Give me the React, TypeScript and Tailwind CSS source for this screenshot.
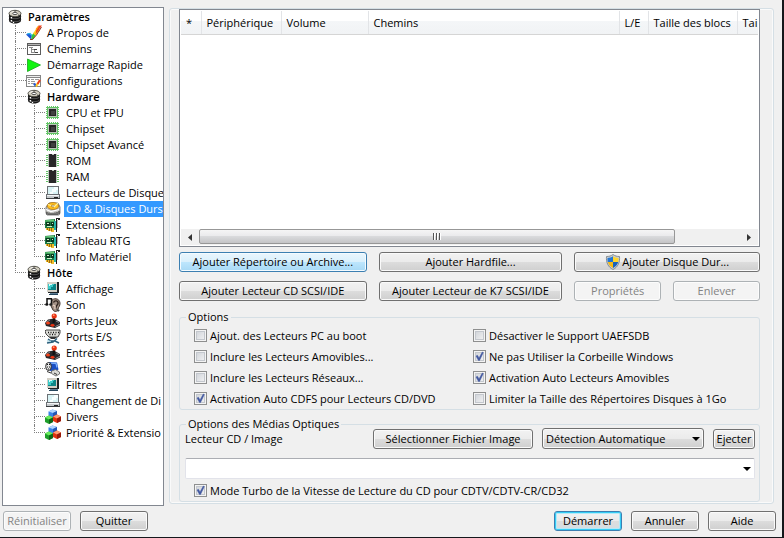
import React from 'react';
import { useState } from 'react';

type IconName =
  | 'drum' | 'check' | 'paths' | 'play' | 'config' | 'chip' | 'rom' | 'floppy'
  | 'disk' | 'board' | 'monitor' | 'sound' | 'joystick' | 'port' | 'output' | 'cubes';

const pins = [2, 4, 6, 8, 10, 12];

const icons: Record<IconName, React.ReactNode> = {
  drum: (
    <>
      <path d="M2 4.5v7c0 1.600 2.600 3 6 3s6-1.400 6-3v-7z" fill="#141414" />
      <path d="M2 7.500c1 1.500 3 2.200 6 2.200s5-.7 6-2.200M2 10.500c1 1.500 3 2.200 6 2.200s5-.7 6-2.200" fill="none" stroke="#6d6d6d" strokeWidth="0.7" />
      <path d="M4.500 8v1.500M4.500 11v1.500M6.500 13v1" stroke="#fff" strokeWidth="1.300" />
      <ellipse cx="8" cy="4.500" rx="6" ry="3.200" fill="#cfcbbd" stroke="#4a4840" strokeWidth="0.9" />
      <path d="M3.500 4c1-1.200 2.500-1.600 4-1.700" stroke="#fff" strokeWidth="0.9" fill="none" />
      <ellipse cx="8" cy="4.500" rx="2.200" ry="1.100" fill="#fff" stroke="#333" strokeWidth="0.8" />
      <path d="M8 3V1.300M11 6l2 .5" stroke="#333" strokeWidth="0.8" />
    </>
  ),
  check: (
    <>
      <path d="M0 9.500l3-1.500 3 2.500-1 4z" fill="#1e55d8" />
      <path d="M1 9l3-.5 2 2" stroke="#29b9e8" strokeWidth="1.200" fill="none" />
      <path d="M5 14.500l1-4.500 2-2.500 2.500 1.500-3.500 5.500z" fill="#37c23b" />
      <path d="M7 8.500L10.500 3.500l3.500 1L9.500 10.500z" fill="#ffd21c" />
      <path d="M10.500 3.500L12.500 .5H16l-5 7-1.500 2z" fill="#f0401c" />
      <path d="M10 3.500L12 1l1 .5-3.500 5z" fill="#ffa51c" />
      <path d="M4 14.500h2.500l4-4.500 5-8" stroke="#8c2410" strokeWidth="0.9" fill="none" />
    </>
  ),
  paths: (
    <g shapeRendering="crispEdges">
      <rect x="1" y="2" width="14" height="12" fill="#5c5c5c" />
      <rect x="2" y="5" width="12" height="8" fill="#fff" />
      <rect x="2" y="3" width="12" height="1" fill="#b5b5b5" />
      <path d="M3 6.500h4M5.500 7v4.500H9M5.500 8.500H9M8.500 8v4" stroke="#8a8a8a" fill="none" />
      <path d="M8 8.500h3M9 11.500h3" stroke="#444" />
    </g>
  ),
  play: <path d="M1.500 2L14.500 8 1.500 14.500z" fill="#10f410" stroke="#17a51c" strokeWidth="0.8" />,
  config: (
    <>
      <g shapeRendering="crispEdges">
        <rect x="0" y="2" width="15" height="12" fill="#858585" />
        <rect x="1" y="5" width="13" height="8" fill="#fff" />
        <rect x="1" y="3" width="13" height="1" fill="#ececec" />
        <path d="M2 6.500h2M5 6.500h3M9 6.500h4M2 8.500h2M5 8.500h4M2 10.500h2M5 10.500h3" stroke="#999" />
      </g>
      <path d="M8 10.500l2 2.500" stroke="#1e55d8" strokeWidth="2.200" />
      <path d="M10 13.500l2-3.500" stroke="#ffc61c" strokeWidth="2" />
      <path d="M11.500 11L14 7" stroke="#f0401c" strokeWidth="2" />
    </>
  ),
  chip: (
    <g shapeRendering="crispEdges">
      {pins.map((p) => (
        <path key={p} d={`M${p + 0.5} 1v13M1 ${p + 0.5}h13`} stroke="#63c466" />
      ))}
      <rect x="3" y="3" width="9" height="9" fill="#b9c4b9" />
      <rect x="4" y="4" width="7" height="7" fill="#262626" />
      <rect x="6" y="6" width="4" height="4" fill="#404040" />
    </g>
  ),
  rom: (
    <g shapeRendering="crispEdges">
      {pins.map((p) => (
        <path key={p} d={`M1 ${p + 0.5}h13`} stroke="#63c466" />
      ))}
      <rect x="3" y="1" width="9" height="13" fill="#b9c4b9" />
      <path d="M4 1h3v1h2V1h2v13H4z" fill="#282828" />
    </g>
  ),
  floppy: (
    <g shapeRendering="crispEdges">
      <path d="M2 1h12v8h1v5H1V9h1z" fill="#6c7175" />
      <path d="M3 2h10v7H3z" fill="#d9f3f5" />
      <path d="M9 2h4v3h-2v2H8v2H5V7h2V4h2z" fill="#f8ffff" />
      <path d="M2 10h12v3H2z" fill="#c6cacd" />
      <path d="M2 10h12v1H2z" fill="#f4f6f7" />
      <path d="M9 12h4v1H9z" fill="#222" />
      <path d="M1 13h14v1H1z" fill="#3a3d40" />
    </g>
  ),
  disk: (
    <>
      <path d="M1 6l3-4h9l2 4v6l-1 2H2l-1-2z" fill="#c3c3bf" stroke="#555" strokeWidth="0.7" />
      <ellipse cx="8" cy="5" rx="5.800" ry="3.500" fill="#ffbf1f" stroke="#a96b06" strokeWidth="0.7" />
      <ellipse cx="8" cy="5" rx="1.600" ry="1" fill="#fff" stroke="#7c5913" strokeWidth="0.6" />
      <path d="M9 6l4-4M3 3.500l3 1" stroke="#fff2a0" strokeWidth="1.200" />
      <path d="M1 8.500l5 2 8-2" stroke="#fff" strokeWidth="1.200" fill="none" />
      <path d="M2 11v2.500M4 11.500v2.500M6 12v2M8 12v2M10 11.500v2.500M12 11v3M14 10v3" stroke="#262626" strokeWidth="1" />
    </>
  ),
  board: (
    <>
      <path d="M0 3l10-1v11l-10-2z" fill="#1c7a43" />
      <path d="M0 3.500l9-1v2H0z" fill="#69c97a" />
      <g shapeRendering="crispEdges">
        <path d="M1 5h4v4H1zM6 5h3v4H6z" fill="#0b3a1f" />
        <path d="M2 6.500h2M7 6.500h1M2 9.500h5" stroke="#c9f2c9" />
        <path d="M1 11h8v3l-1 1-7-2z" fill="#f0bd2a" />
        <path d="M2.500 11v2M4.500 11v3M6.500 11v3" stroke="#9b6a0e" />
        <path d="M9 4h2v9h-2z" fill="#25b5a8" />
        <path d="M11 1h3v1h-2v13h-1z" fill="#1b1b1b" />
        <path d="M12 3h1v8h-1z" fill="#b9b9b9" />
        <path d="M13 1h2v2h-2z" fill="#222" />
      </g>
    </>
  ),
  monitor: (
    <>
      <g shapeRendering="crispEdges">
        <path d="M2 1h12v11H3l-1-1z" fill="#1d2224" />
        <path d="M2 1h10v10H2z" fill="#d2cfc5" />
        <path d="M3 3h8v6H3z" fill="#0c8486" />
        <path d="M3 3h6v1H8v2H6v2H3z" fill="#3ccac8" />
        <path d="M4 3h3v1H5v1H4z" fill="#d8ffff" />
        <path d="M5 12h8v1H5z" fill="#5b7d94" />
        <path d="M4 13h9v1H4z" fill="#25465d" />
      </g>
    </>
  ),
  sound: (
    <>
      <path d="M6.500 4c1.500-3.500 8-3 8.500 2 .2 3-1.500 4-2 6 0 3-4 3-5 1L6 9z" fill="#a39186" stroke="#3c302a" strokeWidth="1" />
      <path d="M8.500 5.500c1-2.500 5-2 4.500 1-.5 2-2.500 2-2 5" fill="none" stroke="#2e221d" strokeWidth="1.300" />
      <path d="M8 8l2 1v3" stroke="#ecd6c8" strokeWidth="1.200" fill="none" />
      <path d="M2 7V1.800h4.500V7" fill="none" stroke="#111" strokeWidth="1.500" />
      <ellipse cx="1.800" cy="7.500" rx="1.600" ry="1.300" fill="#111" />
      <ellipse cx="5.800" cy="7.500" rx="1.600" ry="1.300" fill="#222" />
      <path d="M11 12l4 1-2 2z" fill="#474747" />
    </>
  ),
  joystick: (
    <>
      <path d="M0 10l3-3.500 6-1 6 3.500v3.500l-5 2.500-9-2z" fill="#27272b" />
      <path d="M1 9.500l4-2.500M11 8l3 1.500" stroke="#85878c" fill="none" />
      <path d="M8.500 10l.7-6" stroke="#111" strokeWidth="2.200" />
      <circle cx="9.200" cy="3" r="2.600" fill="#e83212" />
      <circle cx="8.700" cy="2.200" r="0.9" fill="#ff9c74" />
      <ellipse cx="3" cy="10" rx="2" ry="1.500" fill="#f0421a" />
      <ellipse cx="7.500" cy="12.300" rx="2" ry="1.400" fill="#e83212" />
      <path d="M10.500 13.500l4.500-2.300" stroke="#8e8e92" />
    </>
  ),
  port: (
    <>
      <path d="M0 2l1-1h14v3l-2 4H4L1 5z" fill="#dcdcd7" stroke="#333" strokeWidth="0.9" />
      <path d="M3 3.500h1M5.500 3.500h1M8 3.500h1M10.500 3.500h1M13 3.500h1M4.500 5.500h1M7 5.500h1M9.500 5.500h1" stroke="#111" strokeWidth="1.300" />
      <path d="M4 8h8l-2 2H6z" fill="#333" />
      <path d="M3 10l3 2h4l4 2M12 9.500l-4 3.500-6 1" stroke="#2c5f7c" strokeWidth="1.500" fill="none" />
      <path d="M2 12h4l-1 1" stroke="#8fc5d6" fill="none" />
    </>
  ),
  output: (
    <>
      <path d="M4 1l8 .5 1.500 7-5 3-4-2z" fill="#1a4fc4" />
      <path d="M6 2.200l5 .3 1 4" stroke="#80b5ff" strokeWidth="1.200" fill="none" />
      <ellipse cx="3.500" cy="5.500" rx="2.800" ry="4" fill="#e6e6e6" stroke="#222" strokeWidth="1" />
      <path d="M2 3.500h1M4 3.500h1M2 6h1M4 6h1M3 8h1" stroke="#111" />
      <path d="M6.500 10l4-1.500 4 2.500v2l-3.500 2-4.500-2.500z" fill="#dadad6" stroke="#6a6a6a" strokeWidth="0.9" />
      <path d="M2 10.500l4 1.500M9 12l3 1.500" stroke="#333" />
    </>
  ),
  cubes: (
    <>
      <path d="M3.500 2.500L7.500 .5 12 2v4.500L8 8.500 3.500 6.500z" fill="#3a82e8" />
      <path d="M3.500 2.500L7.500 .5 12 2 8 4z" fill="#b2d6ff" />
      <path d="M8 4v4.500l4-2V2z" fill="#2257b5" />
      <path d="M0 8.500l4-2 4 2v4.500l-4 2-4-2z" fill="#1f9e2b" />
      <path d="M0 8.500l4-2 4 2-4 2z" fill="#68ec5a" />
      <path d="M4 10.500V15l4-2V8.500z" fill="#0e6418" />
      <path d="M8 7.500l4-2 4 2V12l-4 2-4-2z" fill="#e2320f" />
      <path d="M8 7.500l4-2 4 2-4 2z" fill="#ff9c74" />
      <path d="M12 9.500V14l4-2V7.500z" fill="#96190a" />
    </>
  ),
};

type Guide = 'line' | 'tee' | 'end' | 'blank';

interface TreeNode {
  label: string;
  icon: IconName;
  children?: TreeNode[];
}

const tree: TreeNode = {
  label: 'Paramètres',
  icon: 'drum',
  children: [
    { label: 'A Propos de', icon: 'check' },
    { label: 'Chemins', icon: 'paths' },
    { label: 'Démarrage Rapide', icon: 'play' },
    { label: 'Configurations', icon: 'config' },
    {
      label: 'Hardware',
      icon: 'drum',
      children: [
        { label: 'CPU et FPU', icon: 'chip' },
        { label: 'Chipset', icon: 'chip' },
        { label: 'Chipset Avancé', icon: 'chip' },
        { label: 'ROM', icon: 'rom' },
        { label: 'RAM', icon: 'rom' },
        { label: 'Lecteurs de Disque', icon: 'floppy' },
        { label: 'CD & Disques Durs', icon: 'disk' },
        { label: 'Extensions', icon: 'board' },
        { label: 'Tableau RTG', icon: 'board' },
        { label: 'Info Matériel', icon: 'board' },
      ],
    },
    {
      label: 'Hôte',
      icon: 'drum',
      children: [
        { label: 'Affichage', icon: 'monitor' },
        { label: 'Son', icon: 'sound' },
        { label: 'Ports Jeux', icon: 'joystick' },
        { label: 'Ports E/S', icon: 'port' },
        { label: 'Entrées', icon: 'joystick' },
        { label: 'Sorties', icon: 'output' },
        { label: 'Filtres', icon: 'monitor' },
        { label: 'Changement de Di', icon: 'floppy' },
        { label: 'Divers', icon: 'cubes' },
        { label: 'Priorité & Extensio', icon: 'cubes' },
      ],
    },
  ],
};

const GuideCell: React.FC<{ type: Guide }> = ({ type }) => (
  <span className="flex h-4 w-[19px] shrink-0 flex-col pl-2">
    {type !== 'blank' && (
      <span
        className={`block h-2 border-l border-dotted border-[#808080] ${type !== 'line' ? 'border-b' : ''}`}
      />
    )}
    {(type === 'line' || type === 'tee') && (
      <span className="block h-2 border-l border-dotted border-[#808080]" />
    )}
  </span>
);

interface TreeItemProps {
  node: TreeNode;
  guides: Guide[];
  selected: string;
  onSelect: (label: string) => void;
}

const TreeItem: React.FC<TreeItemProps> = ({ node, guides, selected, onSelect }) => {
  // A parent that was the last of its branch leaves nothing below it
  const passed = guides.map((g): Guide => (g === 'tee' || g === 'line' ? 'line' : 'blank'));
  const children = node.children ?? [];

  return (
    <li>
      <button
        type="button"
        onClick={() => onSelect(node.label)}
        className="flex h-4 w-full items-center text-left"
      >
        {guides.map((g, i) => (
          <GuideCell key={i} type={g} />
        ))}
        <svg viewBox="0 0 16 16" className="mr-[3px] h-4 w-4 shrink-0">{icons[node.icon]}</svg>
        <span
          className={`h-4 pl-0.5 leading-4 whitespace-nowrap ${node.children ? 'font-semibold' : ''} ${
            selected === node.label ? 'bg-[#3399ff] text-white' : ''
          }`}
        >
          {node.label}
        </span>
      </button>
      {children.length > 0 && (
        <ul>
          {children.map((child, i) => (
            <TreeItem
              key={child.label}
              node={child}
              guides={[...passed, i === children.length - 1 ? 'end' : 'tee']}
              selected={selected}
              onSelect={onSelect}
            />
          ))}
        </ul>
      )}
    </li>
  );
};

const buttonStyles = {
  normal:
    'border-[#707070] bg-[linear-gradient(#f2f2f2,#ebebeb_50%,#dddddd_50%,#cfcfcf)] shadow-[inset_0_0_0_1px_#fafafa]',
  hot: 'border-[#3c7fb1] bg-[linear-gradient(#eaf6fd,#d9f0fc_50%,#bee6fd_50%,#a7d9f5)] shadow-[inset_0_0_0_1px_#f4fbff]',
  primary:
    'border-[#3c7fb1] bg-[linear-gradient(#f2f2f2,#ebebeb_50%,#dddddd_50%,#d5dde2)] shadow-[inset_0_0_0_1px_#35cdf5,inset_0_0_0_2px_#b5e9f8]',
  disabled: 'border-[#adb2b5] bg-[#f4f4f4] text-[#838383] shadow-[inset_0_0_0_1px_#fcfcfc]',
};

interface WinButtonProps {
  variant?: keyof typeof buttonStyles;
  className?: string;
  children: React.ReactNode;
}

const WinButton: React.FC<WinButtonProps> = ({ variant = 'normal', className = '', children }) => (
  <button
    type="button"
    disabled={variant === 'disabled'}
    className={`flex h-5 items-center justify-center rounded-[3px] border whitespace-nowrap ${buttonStyles[variant]} ${className}`}
  >
    {children}
  </button>
);

const CheckBox: React.FC<{ label: string; defaultChecked?: boolean }> = ({ label, defaultChecked }) => (
  <label className="flex h-[21px] items-center gap-[3px] whitespace-nowrap">
    <span className="relative h-[13px] w-[13px] shrink-0">
      <input
        type="checkbox"
        defaultChecked={defaultChecked}
        className="peer block h-[13px] w-[13px] appearance-none border border-[#8e8f8f] bg-[linear-gradient(135deg,#cbcfd5,#f6f6f6)] shadow-[inset_0_0_0_1px_#f4f4f4,inset_0_0_0_2px_#c3c7cd]"
      />
      <svg viewBox="0 0 13 13" className="pointer-events-none absolute inset-0 hidden h-[13px] w-[13px] peer-checked:block">
        <path d="M3 6l1.500-.7L6 8l3.300-6 1 .5L6.500 10.500h-1z" fill="#4258a0" stroke="#4258a0" strokeWidth="0.5" />
      </svg>
    </span>
    {label}
  </label>
);

const DropArrow: React.FC = () => (
  <svg viewBox="0 0 8 4" className="pointer-events-none absolute top-[9px] right-1 h-1 w-2">
    <path d="M0 0h8L4 4z" fill="#000" />
  </svg>
);

const Shield: React.FC = () => (
  <svg viewBox="0 0 16 16" className="h-4 w-4">
    <path d="M8 .5c2 1.500 4 2 6.500 2 .5 6-1.500 10.500-6.500 13-5-2.500-7-7-6.500-13C4 2.500 6 2 8 .5z" fill="#c9ced3" stroke="#7c8489" strokeWidth="0.9" />
    <path d="M8 2.300V8H2.800c-.3-1.300-.4-2.600-.3-4 2.300 0 4-.6 5.500-1.700z" fill="#2477d4" />
    <path d="M8 2.300V8h5.200c.3-1.300.4-2.600.3-4-2.300 0-4-.6-5.500-1.700z" fill="#ffd62e" />
    <path d="M2.800 8H8v6c-2.800-1.500-4.500-3.500-5.200-6z" fill="#f6b911" />
    <path d="M13.200 8H8v6c2.800-1.500 4.500-3.500 5.200-6z" fill="#1762bb" />
  </svg>
);

const columns = [
  { label: '*', width: 'w-5' },
  { label: 'Périphérique', width: 'w-20' },
  { label: 'Volume', width: 'w-[87px]' },
  { label: 'Chemins', width: '' },
  { label: 'L/E', width: 'w-[29px]' },
  { label: 'Taille des blocs', width: 'w-[89px]' },
  { label: 'Tai', width: 'w-[21px]' },
];

const options = [
  { label: 'Ajout. des Lecteurs PC au boot', checked: false },
  { label: 'Désactiver le Support UAEFSDB', checked: false },
  { label: 'Inclure les Lecteurs Amovibles...', checked: false },
  { label: 'Ne pas Utiliser la Corbeille Windows', checked: true },
  { label: 'Inclure les Lecteurs Réseaux...', checked: false },
  { label: 'Activation Auto Lecteurs Amovibles', checked: true },
  { label: 'Activation Auto CDFS pour Lecteurs CD/DVD', checked: true },
  { label: 'Limiter la Taille des Répertoires Disques à 1Go', checked: false },
];

const DeviceList: React.FC = () => (
  <div className="flex h-[238px] flex-col border border-[#828790] bg-white p-px">
    <div className="flex-1 overflow-hidden">
      <table className="w-full table-fixed">
        <thead>
          <tr className="h-[23px] bg-[linear-gradient(#ffffff_45%,#f4f6f8_45%,#f1f3f5)]">
            {columns.map((column) => (
              <th
                key={column.label}
                className={`border-r border-b border-r-[#e2e4e7] border-b-[#d5d5d5] p-0 pt-0.5 pl-[5px] text-left font-normal whitespace-nowrap last:border-r-0 ${column.width}`}
              >
                {column.label}
              </th>
            ))}
          </tr>
        </thead>
        <tbody />
      </table>
    </div>
    <div className="flex h-4 items-center bg-[#f0f0f0]">
      <button type="button" aria-label="Défiler à gauche" className="flex h-4 w-[18px] items-center justify-center">
        <svg viewBox="0 0 4 7" className="h-[7px] w-1"><path d="M4 0v7L0 3.500z" fill="#333" /></svg>
      </button>
      <div className="flex h-4 flex-1">
        <div className="flex h-[15px] w-[88%] items-center justify-center gap-px rounded-[2px] border border-[#979797] bg-[linear-gradient(#f5f5f5,#e9e9eb_50%,#d9dadc_50%,#c4c4c6)]">
          <span className="h-[7px] w-0.5 border-l border-[#555] bg-white" />
          <span className="h-[7px] w-0.5 border-l border-[#555] bg-white" />
          <span className="h-[7px] w-0.5 border-l border-[#555] bg-white" />
        </div>
      </div>
      <button type="button" aria-label="Défiler à droite" className="flex h-4 w-[18px] items-center justify-center">
        <svg viewBox="0 0 4 7" className="h-[7px] w-1"><path d="M0 0v7l4-3.500z" fill="#333" /></svg>
      </button>
    </div>
  </div>
);

const App: React.FC = () => {
  const [selected, setSelected] = useState('CD & Disques Durs');

  return (
    <div className="flex min-h-screen flex-col border-r-2 border-b border-[#15181c] bg-[#f0f0f0] font-['Open_Sans','Noto_Sans',sans-serif] text-[11px] leading-4 text-black">
      <div className="flex flex-1 gap-[5px] pt-[7px] pr-2 pl-0.5">
        <nav className="w-[162px] shrink-0 overflow-hidden border border-[#828790] bg-white pt-px pl-1">
          <ul>
            <TreeItem node={tree} guides={[]} selected={selected} onSelect={setSelected} />
          </ul>
        </nav>

        <main className="mt-px mb-0.5 min-w-0 flex-1 rounded-[3px] border border-[#d5dfe5] pr-[13px] pl-[9px] shadow-[inset_0_0_0_1px_#fafafa]">
          <DeviceList />

          <div className="mt-[5px] grid grid-cols-[188fr_184fr_186fr] gap-x-3 gap-y-[9px]">
            <WinButton variant="hot">Ajouter Répertoire ou Archive...</WinButton>
            <WinButton>Ajouter Hardfile...</WinButton>
            <WinButton className="gap-px"><Shield />Ajouter Disque Dur...</WinButton>
            <WinButton>Ajouter Lecteur CD SCSI/IDE</WinButton>
            <WinButton>Ajouter Lecteur de K7 SCSI/IDE</WinButton>
            <div className="grid grid-cols-2 gap-3">
              <WinButton variant="disabled">Propriétés</WinButton>
              <WinButton variant="disabled">Enlever</WinButton>
            </div>
          </div>

          <fieldset className="mt-2 rounded-[3px] border border-[#d5dfe5]">
            <legend className="ml-1.5 px-0.5">Options</legend>
            <div className="grid grid-cols-[279fr_286fr] pl-3.5">
              {options.map((option) => (
                <CheckBox key={option.label} label={option.label} defaultChecked={option.checked} />
              ))}
            </div>
          </fieldset>

          <fieldset className="mt-1.5 rounded-[3px] border border-[#d5dfe5] pr-1 pl-[5px]">
            <legend className="ml-px px-0.5">Options des Médias Optiques</legend>
            <div className="-mt-1 flex items-center gap-[9px]">
              <label htmlFor="media" className="flex-1">Lecteur CD / Image</label>
              <WinButton className="w-40">Sélectionner Fichier Image</WinButton>
              <div className="relative w-[162px]">
                <select
                  aria-label="Type de lecteur"
                  className={`block h-[21px] w-full appearance-none rounded-[3px] border pl-[3px] ${buttonStyles.normal}`}
                >
                  <option>Détection Automatique</option>
                </select>
                <DropArrow />
              </div>
              <WinButton className="w-[42px]">Ejecter</WinButton>
            </div>
            <div className="relative mt-[9px]">
              <select
                id="media"
                className="block h-[21px] w-full appearance-none rounded-[2px] border border-[#e2e3ea] border-t-[#abadb3] bg-white"
              >
                <option></option>
              </select>
              <DropArrow />
            </div>
            <div className="pt-px pl-[9px]">
              <CheckBox label="Mode Turbo de la Vitesse de Lecture du CD pour CDTV/CDTV-CR/CD32" defaultChecked />
            </div>
          </fieldset>
        </main>
      </div>

      <footer className="flex gap-[9px] pt-[5px] pr-1.5 pb-1.5 pl-[3px]">
        <WinButton variant="disabled" className="w-[68px]">Réinitialiser</WinButton>
        <WinButton className="mr-auto w-[68px]">Quitter</WinButton>
        <WinButton variant="primary" className="w-[68px]">Démarrer</WinButton>
        <WinButton className="w-[68px]">Annuler</WinButton>
        <WinButton className="w-[68px]">Aide</WinButton>
      </footer>
    </div>
  );
};

export default App;
